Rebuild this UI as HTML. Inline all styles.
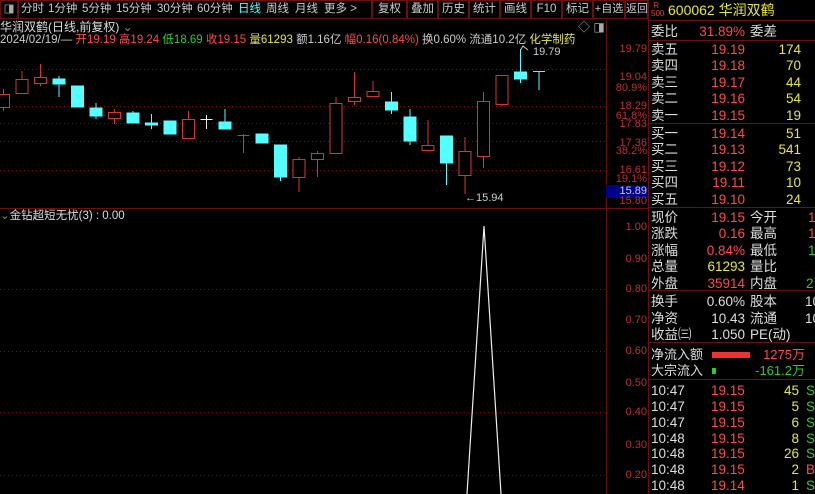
<!DOCTYPE html>
<html><head><meta charset="utf-8"><style>
*{margin:0;padding:0;box-sizing:border-box}
body{width:815px;height:494px;background:#000;overflow:hidden;position:relative;font-family:"Liberation Sans","Noto Sans CJK SC",sans-serif;color:#ccc}
.t{position:absolute;white-space:nowrap;font-size:12px;line-height:14px}
.tb{position:absolute;top:0;height:19px;border:1px solid #6a1010;font-size:11.5px;line-height:17px;color:#ccc;text-align:center;white-space:nowrap;overflow:hidden}
.m{position:absolute;top:2px;font-size:11.5px;line-height:14px;white-space:nowrap;color:#ccc}
.r{color:#ff4a4a}.g{color:#2ecc2e}.y{color:#e6e63c}.w{color:#ddd}.c{color:#5ff}
.row{position:absolute;left:648px;width:167px;height:17px;font-size:13.5px;line-height:17px}
.row span{position:absolute;white-space:nowrap}
.ax{position:absolute;font-size:11px;color:#c03030;right:168px;text-align:right;line-height:12px}
</style></head><body>
<div class="tb" style="left:0;width:18px;color:#aaa">◨</div>
<div class="tb" style="left:18px;width:354px;"></div>
<div class="m" style="left:21px">分时</div>
<div class="m" style="left:48px">1分钟</div>
<div class="m" style="left:82px">5分钟</div>
<div class="m" style="left:116px">15分钟</div>
<div class="m" style="left:157px">30分钟</div>
<div class="m" style="left:197px">60分钟</div>
<div class="m c" style="left:238px">日线</div>
<div class="m" style="left:266px">周线</div>
<div class="m" style="left:295px">月线</div>
<div class="m" style="left:324px">更多 &gt;</div>
<div class="tb" style="left:372px;width:35px">复权</div>
<div class="tb" style="left:407px;width:31px">叠加</div>
<div class="tb" style="left:438px;width:31px">历史</div>
<div class="tb" style="left:469px;width:31px">统计</div>
<div class="tb" style="left:500px;width:31px">画线</div>
<div class="tb" style="left:531px;width:31px">F10</div>
<div class="tb" style="left:562px;width:31px">标记</div>
<div class="tb" style="left:593px;width:32px;font-size:11px">+自选</div>
<div class="tb" style="left:625px;width:23px;font-size:11px">返回</div>
<div class="t w" style="left:0;top:20px;font-size:12px">华润双鹤(日线,前复权) <span style="color:#888">⌄</span></div>
<div class="t" style="left:0;top:33px;font-size:11.5px;color:#ccc">2024/02/19/— <span class="r">开19.19 高19.24</span> <span class="g">低18.69</span> <span class="r">收19.15</span> <span class="y">量61293</span> 额1.16亿 <span class="r">幅0.16(0.84%)</span> 换0.60% 流通10.2亿 <span class="y">化学制药</span></div>
<div class="t" style="left:578px;top:20px;color:#aaa">◇ ◨</div>
<div class="t w" style="left:0;top:209px;font-size:11.5px"><span style="color:#888">⌄</span>金钻超短无忧(3) : 0.00</div>

<svg style="position:absolute;left:0;top:0" width="815" height="494">
<g stroke="#6a1010" stroke-width="1">
<line x1="606.5" y1="20" x2="606.5" y2="494"/>
<line x1="648.5" y1="0" x2="648.5" y2="494"/>
<line x1="0" y1="208.5" x2="648" y2="208.5"/>
<line x1="648" y1="20.5" x2="815" y2="20.5"/>
<line x1="648" y1="40.5" x2="815" y2="40.5"/>
<line x1="648" y1="123.5" x2="815" y2="123.5"/>
<line x1="648" y1="207.5" x2="815" y2="207.5"/>
<line x1="648" y1="290.5" x2="815" y2="290.5"/>
<line x1="648" y1="342.5" x2="815" y2="342.5"/>
<line x1="648" y1="379.5" x2="815" y2="379.5"/>
</g>
<g stroke="#7a1515" stroke-dasharray="1,3">
<line x1="0" y1="69.5" x2="606" y2="69.5"/><line x1="0" y1="106.5" x2="606" y2="106.5"/>
<line x1="0" y1="123.5" x2="606" y2="123.5"/><line x1="0" y1="141.5" x2="606" y2="141.5"/>
<line x1="0" y1="170.5" x2="606" y2="170.5"/>
<line x1="0" y1="289.5" x2="606" y2="289.5"/><line x1="0" y1="351.5" x2="606" y2="351.5"/>
<line x1="0" y1="412.5" x2="606" y2="412.5"/><line x1="0" y1="475.5" x2="606" y2="475.5"/>
</g>
<g stroke="#d03838" stroke-width="1" fill="#000">
<line x1="3.5" y1="89" x2="3.5" y2="111"/><rect x="-2.5" y="94.5" width="12" height="13"/>
<line x1="22" y1="71" x2="22" y2="93"/><rect x="16" y="79.5" width="12" height="14"/>
<line x1="40.5" y1="64" x2="40.5" y2="86"/><rect x="34.5" y="77.5" width="12" height="6"/>
<line x1="114.5" y1="109" x2="114.5" y2="124"/><rect x="108.5" y="112.5" width="12" height="6"/>
<line x1="188.5" y1="111" x2="188.5" y2="138"/><rect x="182.5" y="119.5" width="12" height="19"/>
<line x1="243.5" y1="134" x2="243.5" y2="153"/><line x1="237.5" y1="135.5" x2="249.5" y2="135.5"/>
<line x1="299" y1="157" x2="299" y2="192"/><rect x="293" y="159.5" width="12" height="18"/>
<line x1="317.5" y1="151" x2="317.5" y2="177"/><rect x="311.5" y="153.5" width="12" height="6"/>
<line x1="336" y1="97" x2="336" y2="153"/><rect x="330" y="103.5" width="12" height="50"/>
<line x1="354.5" y1="72" x2="354.5" y2="105"/><rect x="348.5" y="97.5" width="12" height="4"/>
<line x1="373" y1="81" x2="373" y2="96"/><rect x="367" y="91.5" width="12" height="5"/>
<line x1="428" y1="120" x2="428" y2="150"/><rect x="422" y="145.5" width="12" height="5"/>
<line x1="465" y1="137" x2="465" y2="194"/><rect x="459" y="151.5" width="12" height="24"/>
<line x1="483.5" y1="92" x2="483.5" y2="168"/><rect x="477.5" y="101.5" width="12" height="55"/>
<line x1="502" y1="75" x2="502" y2="106"/><rect x="496" y="75.5" width="12" height="29"/>
</g>
<g stroke="#54ffff" fill="#54ffff">
<line x1="59" y1="76" x2="59" y2="97"/><rect x="53" y="79" width="12" height="5"/>
<rect x="71.5" y="86" width="12" height="21"/>
<line x1="96" y1="103" x2="96" y2="119"/><rect x="90" y="108" width="12" height="8"/>
<line x1="133" y1="111" x2="133" y2="123"/><rect x="127" y="113" width="12" height="10"/>
<line x1="151.5" y1="114" x2="151.5" y2="129"/><rect x="145.5" y="123" width="12" height="2"/>
<rect x="164" y="121" width="12" height="13"/>
<line x1="225" y1="109" x2="225" y2="129"/><rect x="219" y="122" width="12" height="7"/>
<rect x="256" y="134" width="12" height="9"/>
<line x1="280.5" y1="145" x2="280.5" y2="181"/><rect x="274.5" y="145" width="12" height="32"/>
<line x1="391.5" y1="92" x2="391.5" y2="114"/><rect x="385.5" y="102" width="12" height="8"/>
<line x1="410" y1="109" x2="410" y2="145"/><rect x="404" y="117" width="12" height="24"/>
<line x1="446.5" y1="136" x2="446.5" y2="185"/><rect x="440.5" y="136" width="12" height="27"/>
<line x1="520.5" y1="49" x2="520.5" y2="83"/><rect x="514.5" y="72" width="12" height="7"/>
<line x1="539" y1="71" x2="539" y2="90"/><line x1="533" y1="71.5" x2="545" y2="71.5"/>
</g>
<g stroke="#eee"><line x1="206.5" y1="115" x2="206.5" y2="129"/><line x1="200.5" y1="119.5" x2="212.5" y2="119.5"/></g>
<g stroke="#ccc" fill="none"><path d="M520.5 50 L523 46 L528 50"/></g>
<polyline points="467,494 484,226 501,494" fill="none" stroke="#eee" stroke-width="1.2"/>
<rect x="606" y="185" width="42" height="13" fill="#00008c"/>
<rect x="712" y="352" width="38" height="6" fill="#ee3333"/>
<rect x="712" y="368" width="4" height="6" fill="#2ecc2e"/>
</svg>
<div class="t" style="left:533px;top:45px;font-size:11px;color:#ccc">19.79</div>
<div class="t" style="left:465px;top:191px;font-size:11px;color:#ccc">←15.94</div>
<div class="ax" style="top:43px">19.79</div>
<div class="ax" style="top:71px">19.04</div>
<div class="ax" style="top:82px">80.9%</div>
<div class="ax" style="top:100px">18.29</div>
<div class="ax" style="top:110px">61.8%</div>
<div class="ax" style="top:118px">17.83</div>
<div class="ax" style="top:137px">17.36</div>
<div class="ax" style="top:145px">38.2%</div>
<div class="ax" style="top:164px">16.61</div>
<div class="ax" style="top:173px">19.1%</div>
<div class="ax" style="top:195px">15.80</div>
<div class="ax" style="top:185px;color:#ccc">15.89</div>
<div class="ax" style="top:221px">1.00</div>
<div class="ax" style="top:253px">0.90</div>
<div class="ax" style="top:283px">0.80</div>
<div class="ax" style="top:314px">0.70</div>
<div class="ax" style="top:345px">0.60</div>
<div class="ax" style="top:377px">0.50</div>
<div class="ax" style="top:406px">0.40</div>
<div class="ax" style="top:439px">0.30</div>
<div class="ax" style="top:469px">0.20</div>

<div class="t" style="left:651px;top:2px;font-size:8px;line-height:8px;color:#e04040">&nbsp;R<br>500</div>
<div class="t y" style="left:668px;top:2px;font-size:14px;line-height:17px">600062 华润双鹤</div>
<div class="row" style="top:23px"><span class="w" style="left:3px">委比</span><span class="r" style="right:70px">31.89%</span><span class="w" style="left:102px">委差</span></div>
<div class="row" style="top:41px"><span class="w" style="left:3px">卖五</span><span class="r" style="right:70px">19.19</span><span class="y" style="right:14px">174</span></div>
<div class="row" style="top:57px"><span class="w" style="left:3px">卖四</span><span class="r" style="right:70px">19.18</span><span class="y" style="right:14px">70</span></div>
<div class="row" style="top:74px"><span class="w" style="left:3px">卖三</span><span class="r" style="right:70px">19.17</span><span class="y" style="right:14px">44</span></div>
<div class="row" style="top:90px"><span class="w" style="left:3px">卖二</span><span class="r" style="right:70px">19.16</span><span class="y" style="right:14px">54</span></div>
<div class="row" style="top:107px"><span class="w" style="left:3px">卖一</span><span class="r" style="right:70px">19.15</span><span class="y" style="right:14px">19</span></div>
<div class="row" style="top:125px"><span class="w" style="left:3px">买一</span><span class="r" style="right:70px">19.14</span><span class="y" style="right:14px">51</span></div>
<div class="row" style="top:141px"><span class="w" style="left:3px">买二</span><span class="r" style="right:70px">19.13</span><span class="y" style="right:14px">541</span></div>
<div class="row" style="top:158px"><span class="w" style="left:3px">买三</span><span class="r" style="right:70px">19.12</span><span class="y" style="right:14px">73</span></div>
<div class="row" style="top:174px"><span class="w" style="left:3px">买四</span><span class="r" style="right:70px">19.11</span><span class="y" style="right:14px">10</span></div>
<div class="row" style="top:191px"><span class="w" style="left:3px">买五</span><span class="r" style="right:70px">19.10</span><span class="y" style="right:14px">24</span></div>
<div class="row" style="top:209px"><span class="w" style="left:3px">现价</span><span class="r" style="right:70px">19.15</span><span class="w" style="left:102px">今开</span><span class="r" style="left:160px">1</span></div>
<div class="row" style="top:225px"><span class="w" style="left:3px">涨跌</span><span class="r" style="right:70px">0.16</span><span class="w" style="left:102px">最高</span><span class="r" style="left:160px">1</span></div>
<div class="row" style="top:242px"><span class="w" style="left:3px">涨幅</span><span class="r" style="right:70px">0.84%</span><span class="w" style="left:102px">最低</span><span class="g" style="left:160px">1</span></div>
<div class="row" style="top:258px"><span class="w" style="left:3px">总量</span><span class="y" style="right:70px">61293</span><span class="w" style="left:102px">量比</span></div>
<div class="row" style="top:275px"><span class="w" style="left:3px">外盘</span><span class="r" style="right:70px">35914</span><span class="w" style="left:102px">内盘</span><span class="g" style="left:158px">2</span></div>
<div class="row" style="top:293px"><span class="w" style="left:3px">换手</span><span class="w" style="right:70px">0.60%</span><span class="w" style="left:102px">股本</span><span class="w" style="left:157px">10</span></div>
<div class="row" style="top:310px"><span class="w" style="left:3px">净资</span><span class="w" style="right:70px">10.43</span><span class="w" style="left:102px">流通</span><span class="w" style="left:157px">10</span></div>
<div class="row" style="top:326px"><span class="w" style="left:3px">收益㈢</span><span class="w" style="right:70px">1.050</span><span class="w" style="left:102px">PE(动)</span></div>
<div class="row" style="top:346px;font-size:13px"><span class="w" style="left:3px">净流入额</span><span class="r" style="right:10px">1275万</span></div>
<div class="row" style="top:362px;font-size:13px"><span class="w" style="left:3px">大宗流入</span><span class="g" style="right:10px">-161.2万</span></div>
<div class="row" style="top:382px"><span class="w" style="left:3px">10:47</span><span class="r" style="left:63px">19.15</span><span class="y" style="right:16px">45</span><span class="g" style="left:158px">S</span></div>
<div class="row" style="top:398px"><span class="w" style="left:3px">10:47</span><span class="r" style="left:63px">19.15</span><span class="y" style="right:16px">5</span><span class="g" style="left:158px">S</span></div>
<div class="row" style="top:414px"><span class="w" style="left:3px">10:47</span><span class="r" style="left:63px">19.15</span><span class="y" style="right:16px">6</span><span class="g" style="left:158px">S</span></div>
<div class="row" style="top:430px"><span class="w" style="left:3px">10:48</span><span class="r" style="left:63px">19.15</span><span class="y" style="right:16px">8</span><span class="g" style="left:158px">S</span></div>
<div class="row" style="top:445px"><span class="w" style="left:3px">10:48</span><span class="r" style="left:63px">19.15</span><span class="y" style="right:16px">26</span><span class="g" style="left:158px">S</span></div>
<div class="row" style="top:461px"><span class="w" style="left:3px">10:48</span><span class="r" style="left:63px">19.15</span><span class="y" style="right:16px">2</span><span class="r" style="left:158px">B</span></div>
<div class="row" style="top:477px"><span class="w" style="left:3px">10:48</span><span class="r" style="left:63px">19.14</span><span class="y" style="right:16px">1</span><span class="g" style="left:158px">S</span></div>
</body></html>
